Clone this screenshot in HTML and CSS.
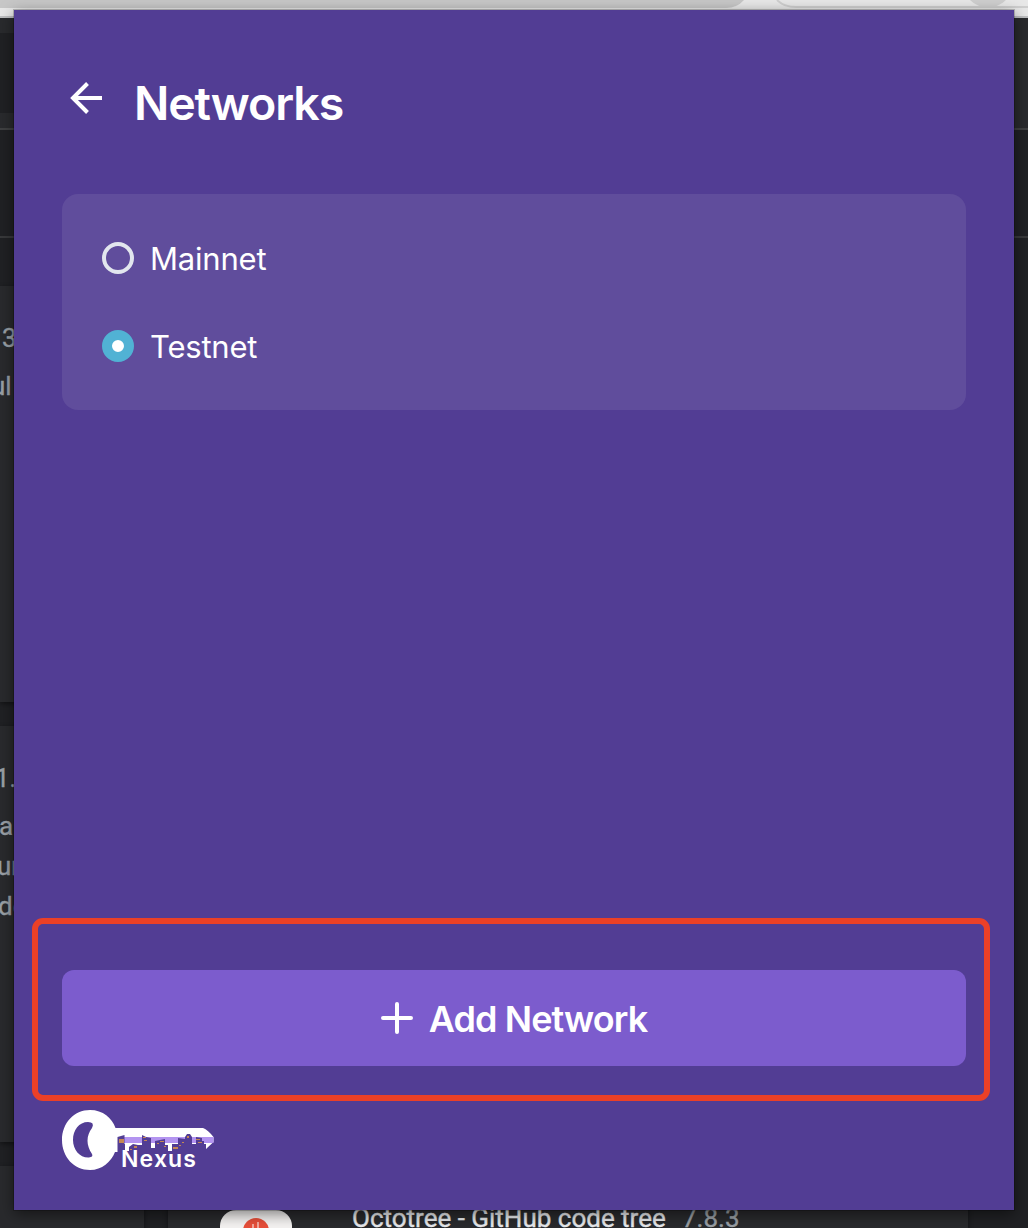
FILE: index.html
```html
<!DOCTYPE html>
<html lang="en">
<head>
<meta charset="utf-8">
<title>Networks</title>
<link rel="stylesheet" href="styles.css">
</head>
<body>
<div class="screen">
  <div class="browser-bar">
    <svg width="1028" height="18" viewBox="0 0 1028 18">
      <path d="M0 0H744Q737 8 726 8H0Z" fill="#c7c7c7"/>
      <circle cx="988" cy="-18" r="25.5" fill="#cfcfcf"/>
      <path d="M777 0Q784 7 796 7H1028" fill="none" stroke="#cfcfcf" stroke-width="2"/>
      <path d="M0 17H1028" stroke="#bdbec0" stroke-width="2"/>
    </svg>
  </div>
  <div class="extensions-page">
    <div class="toolbar"><div class="search"></div></div>
    <div class="subbar"></div>
    <div class="cards">
      <div class="card first"><p class="version">3</p><p class="desc">ul</p></div>
      <div class="card second"><p class="version">1.</p><p class="desc">a</p><p>ur</p><p>de</p></div>
      <div class="last-row">
        <div class="card"></div>
        <div class="card octotree">
          <svg class="ext-icon" width="72" height="36" viewBox="0 0 72 36">
            <rect width="72" height="72" rx="16" fill="#f5f3f2"/>
            <circle cx="36" cy="21" r="13" fill="#e94f3a"/>
            <path d="M33 14V20M38 12V20" fill="none" stroke="#f5a79b" stroke-width="2"/>
          </svg>
          <span class="ext-name">Octotree - GitHub code tree</span><span class="ext-version">7.8.3</span>
        </div>
      </div>
    </div>
  </div>

  <main class="popup">
    <header class="head">
      <svg class="back" width="34" height="34" viewBox="0 0 34 34"><path d="M33 17H5M18.500 2.500L4 17L18.500 31.500" fill="none" stroke="#fff" stroke-width="4"/></svg>
      <h1>Networks</h1>
    </header>
    <section class="networks">
      <label class="option"><span class="radio"></span><span class="label">Mainnet</span></label>
      <label class="option"><span class="radio checked"></span><span class="label">Testnet</span></label>
    </section>
    <div class="highlight">
      <button class="add">
        <svg width="32" height="32" viewBox="0 0 32 32"><path d="M16 2V30M2 16H30" stroke="#fff" stroke-width="4" stroke-linecap="round"/></svg>
        <span>Add Network</span>
      </button>
    </div>
    <footer class="brand">
      <svg width="156" height="64" viewBox="0 0 156 64">
        <path fill="#fff" fill-rule="evenodd" d="M28 0C41 0 50 8 53.500 18H141Q146 20 151.500 27V32L144 39V34H110V41H106V35H93V38H89V35H76L67 37V41H63V34H56V42H53C49 52 40 60 28 60C12 60 0 47 0 30S12 0 28 0ZM26 12C17 12 11 20 11 30S18 48 27 47.500Q31.500 47 30 44C24 35 24 26 30 18Q33 12 26 12Z"/>
        <path fill="#b394f0" d="M62 27H151.500V33H62Z"/>
        <path fill="#523d94" d="M55.500 27L62.500 25V42H55.500ZM67 37L71 34L76 35V42H67ZM80 25L84 27L89 28V36H80ZM93 31L103 29V38H93ZM116 28L123 29V38H116ZM123 27L125 24H128L130 27V36H123ZM134 27L140 28V31H142V36H134Z"/>
        <path fill="#c58653" d="M57 29H62V33H57ZM81 27H84V28H81ZM82 30H85V31H82ZM72 36H75V38H72ZM68 39H70V40H68ZM98 31H102V32H98ZM95 33H97V34H95ZM102 36H104V37H102ZM111 37H116V39H111ZM120 32H122V33H120ZM125 26H127V28H125ZM134 29H138V30H134ZM136 32H140V33H136ZM117 35H119V36H117Z"/>
        <text x="59" y="57" fill="#fff" font-family="Inter, sans-serif" font-size="23" font-weight="600" textLength="75">Nexus</text>
      </svg>
    </footer>
  </main>
</div>
</body>
</html>
```
FILE: styles.css
```css
* { box-sizing: border-box; }
body { margin: 0; background: #202124; }
p, h1 { margin: 0; }
svg { display: block; flex: none; }
.screen { position: relative; width: 1028px; height: 1228px; overflow: hidden; }
.browser-bar { height: 18px; background: #e8e8e8; }
.extensions-page { height: 1210px; overflow: hidden; font-family: Roboto, sans-serif; font-size: 26px; line-height: 40px; color: #9aa0a6; -webkit-text-stroke: .35px currentColor; }
.toolbar { height: 112px; padding: 15px 200px 0 0; background: #292a2d; border-bottom: 2px solid #3f4042; }
.search { height: 80px; background: #202124; }
.subbar { height: 108px; border-bottom: 2px solid #38393b; }
.cards { display: flex; flex-direction: column; gap: 24px; padding-top: 48px; }
.card { background: #292a2d; box-shadow: 0 2px 5px rgba(0, 0, 0, .45); }
.first, .second { width: 144px; height: 416px; }
.first { padding-top: 32px; }
.first .version { padding-left: 2px; }
.first .desc { margin: 8px 0 0 -9px; }
.second { padding-top: 32px; }
.second .version { margin-left: -5px; }
.second .desc { margin: 8px 0 0 -1px; }
.second p:nth-child(3) { margin-left: -3px; }
.second p:nth-child(4) { margin-left: -2px; }
.last-row { display: grid; grid-template-columns: 144px 800px; gap: 24px; height: 416px; }
.octotree { display: flex; align-items: flex-start; padding: 44px 0 0 52px; }
.ext-name { flex: none; width: 390px; margin-top: -12px; padding-left: 60px; white-space: nowrap; color: #e8eaed; }
.ext-version { margin-top: -12px; }

.popup { position: absolute; left: 14px; top: 10px; width: 1000px; height: 1200px; display: flex; flex-direction: column; padding: 68px 48px 36px; background: #523d94; box-shadow: 0 0 0 1px rgba(0, 0, 0, .2), 0 4px 14px rgba(0, 0, 0, .5); font-family: Inter, "Liberation Sans", sans-serif; color: #fff; }
.head { display: flex; gap: 31px; height: 116px; padding: 3px 0 0 7px; }
.head h1 { margin-top: -2px; font-size: 46.5px; line-height: 48px; font-weight: 600; letter-spacing: -1.1px; }
.networks { height: 216px; padding: 48px 40px; display: flex; flex-direction: column; gap: 56px; border-radius: 16px; background: #604d9c; }
.option { display: flex; align-items: center; gap: 16px; height: 32px; font-size: 31px; line-height: 34px; letter-spacing: -.2px; }
.label { padding-top: 2px; }
.radio { width: 32px; height: 32px; border: 4px solid #e2e6ee; border-radius: 50%; }
.radio.checked { border: 10px solid #51b2d4; background: #fff; }
.highlight { height: 183px; margin: auto -24px 9px -30px; padding: 46px 18px 0 24px; border: 6px solid #eb4027; border-radius: 11px; }
.add { display: flex; align-items: center; justify-content: center; gap: 16px; width: 904px; height: 96px; padding: 0; border: 0; border-radius: 12px; background: #7c5ccd; color: #fff; font: 600 36px Inter, "Liberation Sans", sans-serif; letter-spacing: -.9px; }
.add span { padding-top: 2px; }
.brand { height: 64px; }
```
